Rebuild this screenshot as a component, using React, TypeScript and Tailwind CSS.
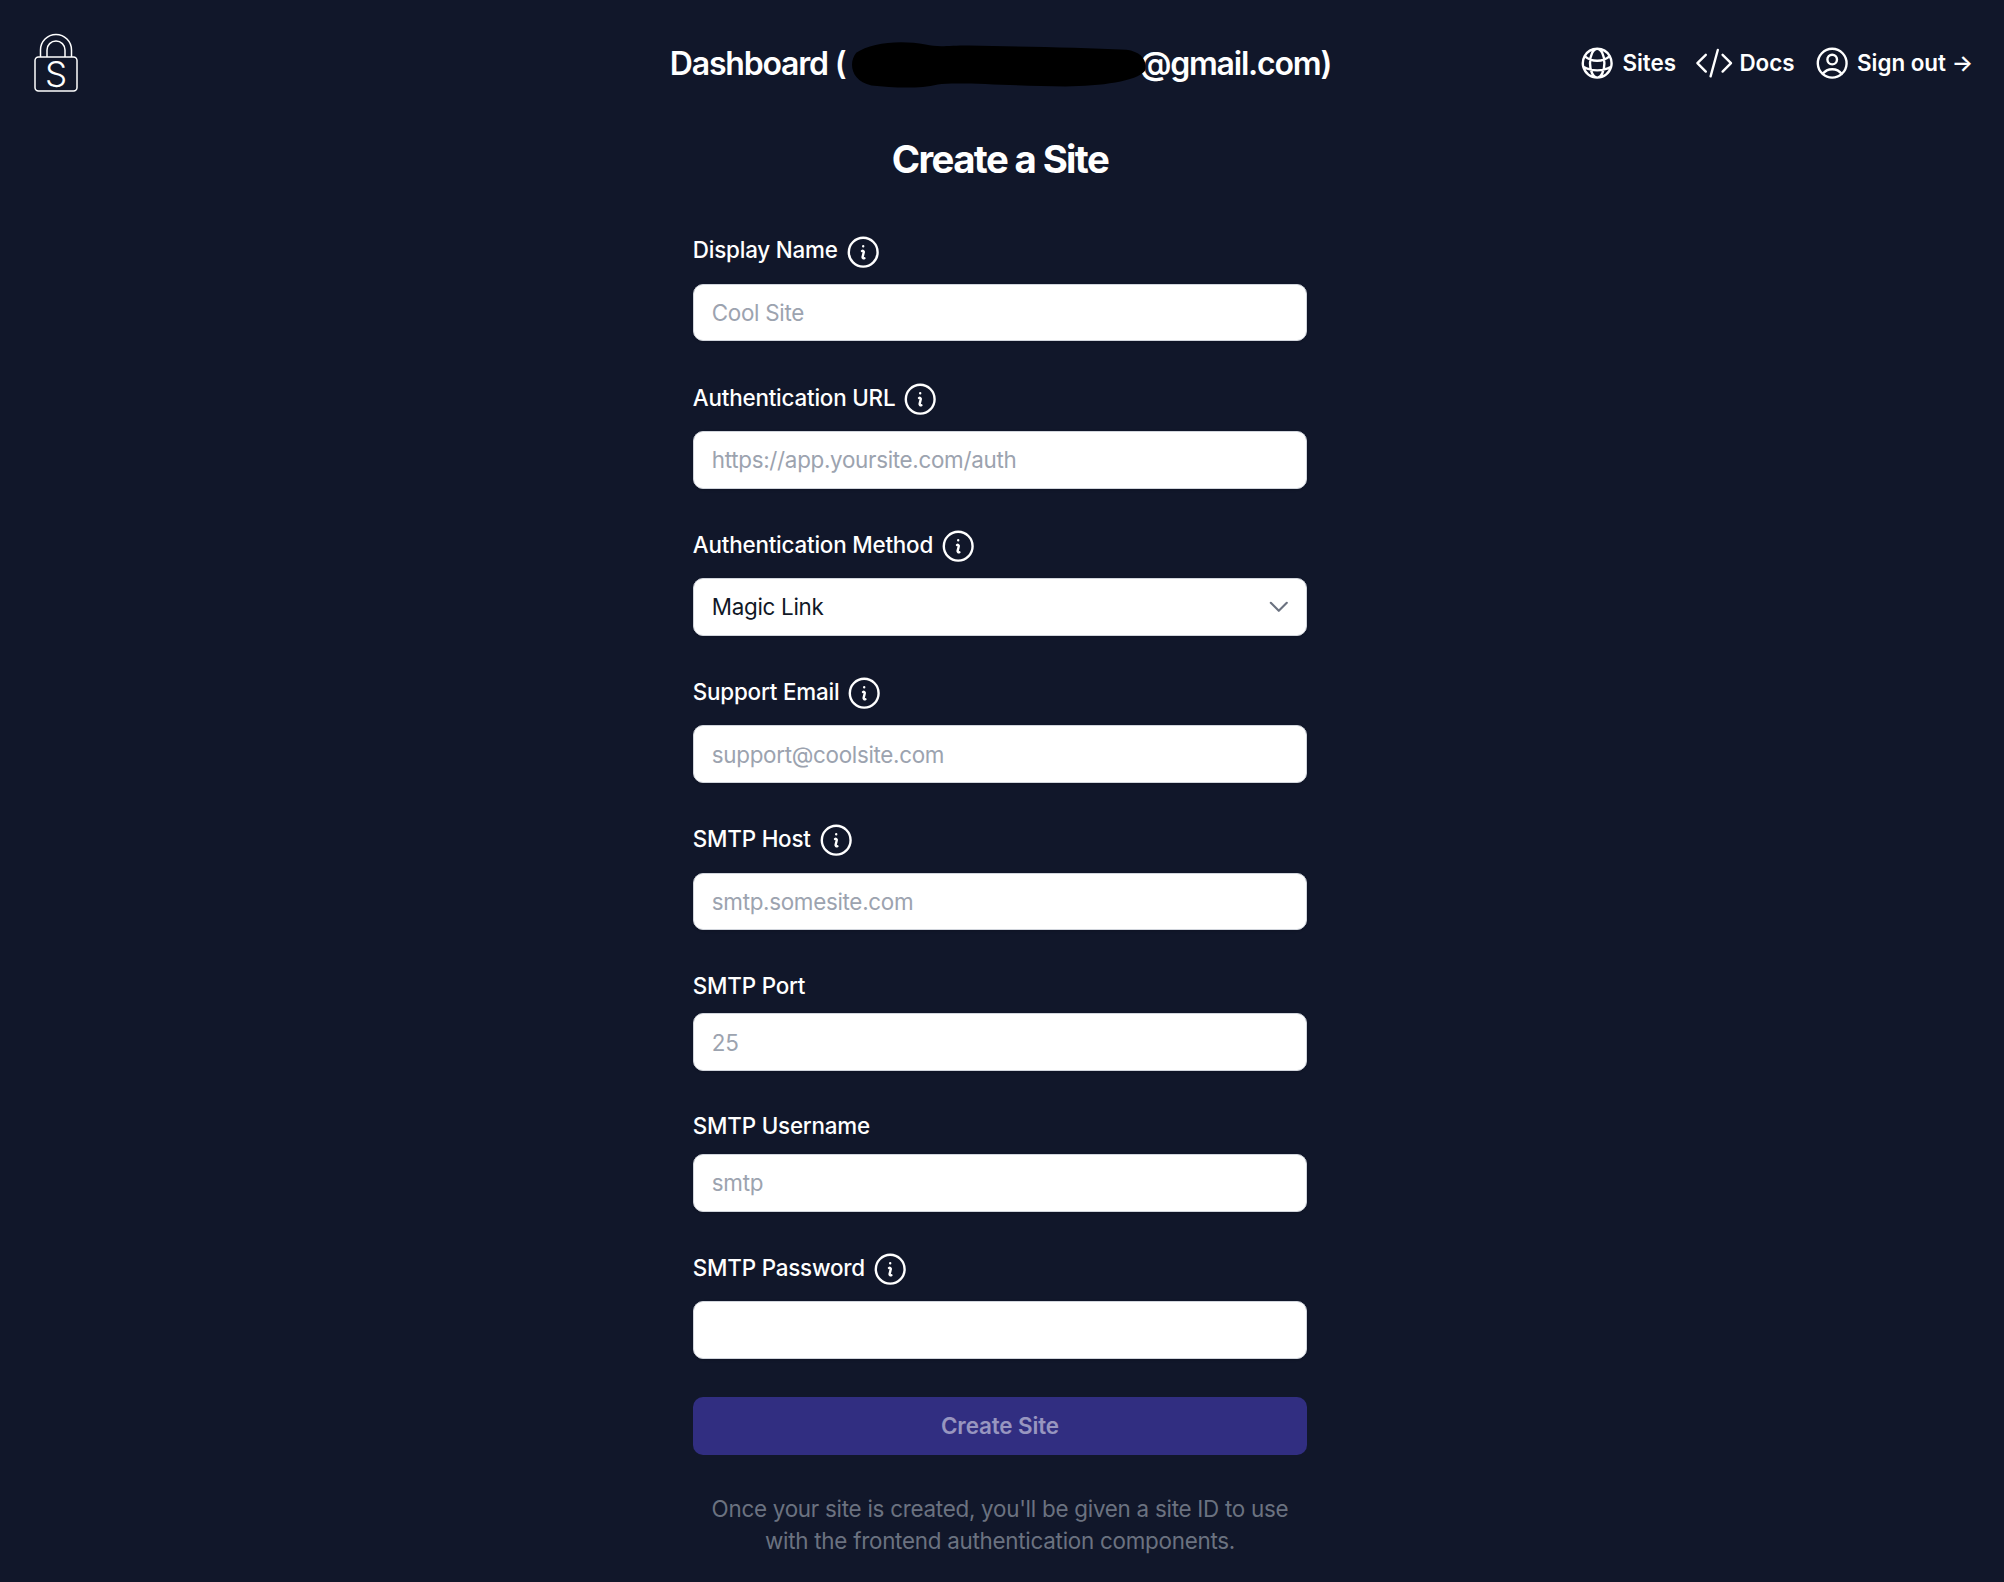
import { HiOutlineChevronDown, HiOutlineCodeBracket, HiOutlineGlobeAlt, HiOutlineInformationCircle, HiOutlineUserCircle } from "react-icons/hi2";

const fieldClass =
  "block w-full h-[57.6px] rounded-[10px] border border-gray-300 bg-white px-[18px] text-[22.4px] tracking-[-0.3px] text-[#111827] placeholder:text-[#9ca3af] shadow-sm outline-none";

function Logo() {
  return (
    <svg width="44" height="58" viewBox="0 0 44 58" fill="none" stroke="white" strokeWidth="1.5" className="overflow-visible">
      <rect x="1" y="23" width="42" height="34" rx="3.5" />
      <path d="M6.5 23V16a15.5 15.5 0 0 1 31 0v7" />
      <path d="M13 23V16a9 9 0 0 1 18 0v7" />
      <text x="22" y="53" textAnchor="middle" fontSize="35" fontWeight="300" fill="white" stroke="none" fontFamily="Inter, sans-serif">
        S
      </text>
    </svg>
  );
}

function Label({ text, info }: { text: string; info?: boolean }) {
  return (
    <div className="flex items-center gap-[8px] text-[22.4px] leading-[32px] font-medium tracking-[-0.2px] text-white">
      <span className={info ? "pb-[3px]" : "pt-[1px]"}>{text}</span>
      {info && <HiOutlineInformationCircle className="w-[38.4px] h-[38.4px] -ml-[2px]" strokeWidth={1.5} />}
    </div>
  );
}

function Field({ text, info, placeholder, type = "text" }: { text: string; info?: boolean; placeholder?: string; type?: string }) {
  return (
    <div>
      <Label text={text} info={info} />
      <input type={type} placeholder={placeholder} className={`${info ? "mt-[12.8px]" : "mt-[11.8px]"} ${fieldClass}`} />
    </div>
  );
}

export default function App() {
  return (
    <div className="min-h-[1582px] bg-[#11172a] font-['Inter',sans-serif] text-white">
      <header className="grid grid-cols-[1fr_auto_1fr] items-center pt-[34px] pl-[34px] pr-[31px]">
        <Logo />
        <h1 className="flex items-center mr-[6px] pt-[1px] text-[32px] leading-[48px] font-semibold tracking-[-1.2px] whitespace-nowrap">
          <span>Dashboard (</span>
          <span className="relative inline-block w-[294px] h-[48px]">
            <svg className="absolute left-[1px] top-[0px]" width="306" height="50" viewBox="0 0 300 48">
              <path
                d="M10 12C24 2 54 -1 78 4C90 7 100 5 120 5C170 6 230 7 275 9C290 11 296 20 293 30C285 40 250 45 215 45C170 45 110 40 90 43C70 48 45 46 25 44C5 40 2 22 10 12Z"
                fill="black"
              />
            </svg>
          </span>
          <span>@gmail.com)</span>
        </h1>
        <nav className="flex items-center justify-end text-[22.4px] leading-[32px] font-semibold">
          <a className="flex items-center gap-[6px]">
            <HiOutlineGlobeAlt className="w-[38.4px] h-[38.4px]" strokeWidth={1.5} />
            <span>Sites</span>
          </a>
          <a className="flex items-center gap-[6px] ml-[19px]">
            <HiOutlineCodeBracket className="w-[38.4px] h-[38.4px]" strokeWidth={1.5} />
            <span>Docs</span>
          </a>
          <a className="flex items-center gap-[6px] ml-[18px]">
            <HiOutlineUserCircle className="w-[38.4px] h-[38.4px]" strokeWidth={1.5} />
            <span>Sign out →</span>
          </a>
        </nav>
      </header>

      <div className="flex justify-center pr-[4px]">
        <main className="w-[614.4px] mt-[42px]">
          <h2 className="text-center text-[38.4px] leading-[51.2px] font-bold tracking-[-1.65px]">Create a Site</h2>
          <form className="mt-[47.5px] flex flex-col gap-[38.4px]">
            <Field text="Display Name" info placeholder="Cool Site" />
            <Field text="Authentication URL" info placeholder="https://app.yoursite.com/auth" />
            <div>
              <Label text="Authentication Method" info />
              <div className="relative mt-[12.8px]">
                <select className={`${fieldClass} appearance-none`} defaultValue="Magic Link">
                  <option>Magic Link</option>
                </select>
                <HiOutlineChevronDown className="absolute right-[16px] top-[16px] w-[25.6px] h-[25.6px] text-[#6b7280]" strokeWidth={2} />
              </div>
            </div>
            <Field text="Support Email" info placeholder="support@coolsite.com" />
            <Field text="SMTP Host" info placeholder="smtp.somesite.com" />
            <Field text="SMTP Port" placeholder="25" />
            <Field text="SMTP Username" placeholder="smtp" />
            <Field text="SMTP Password" info type="password" />
            <button type="button" className="h-[57.6px] rounded-[10px] bg-[#312e81] text-[22.4px] font-semibold tracking-[-0.1px] text-white/50">
              Create Site
            </button>
          </form>
          <p className="mt-[38.4px] text-center text-[22.4px] leading-[32px] tracking-[-0.26px] text-[#6b7280]">
            Once your site is created, you'll be given a site ID to use with the frontend authentication components.
          </p>
        </main>
      </div>
    </div>
  );
}
